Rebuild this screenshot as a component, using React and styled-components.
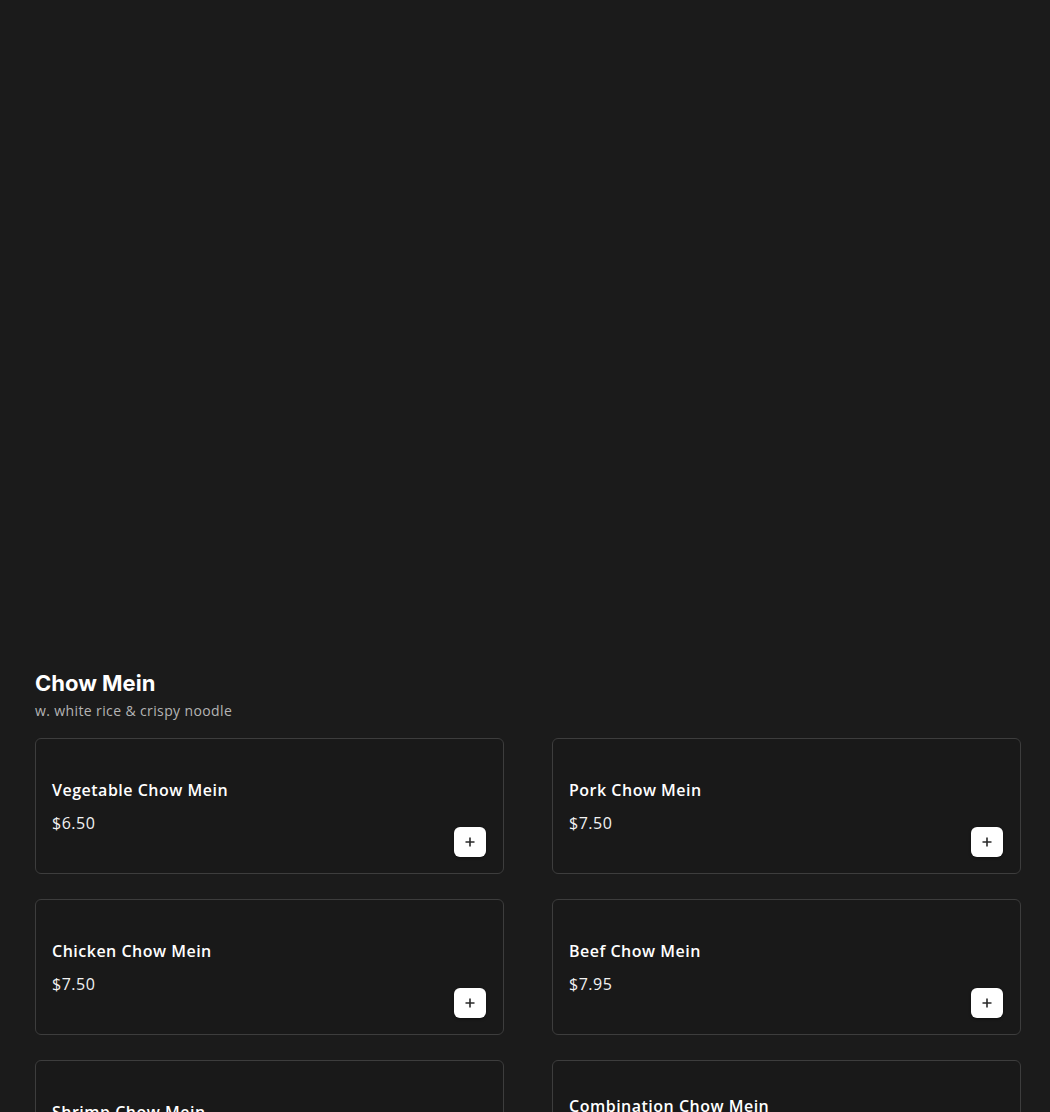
import React from 'react';
import styled, { createGlobalStyle } from 'styled-components';

const GlobalStyle = createGlobalStyle`
  body {
    margin: 0;
    background: #1b1b1b;
    font-family: "Open Sans", "Noto Sans", sans-serif;
    color: #fff;
  }
`;

const Page = styled.div`
  min-height: 1112px;
  background: #1b1b1b;
`;

const Hero = styled.div`
  height: 668px;
`;

const Section = styled.section`
  padding: 0 29px 0 35px;
`;

const Title = styled.h2`
  margin: 0;
  font-family: Inter, Roboto, sans-serif;
  font-weight: 700;
  font-size: 22px;
  line-height: 30px;
  color: #fff;
`;

const Subtitle = styled.p`
  margin: 3px 0 0;
  font-size: 14px;
  line-height: 20px;
  color: #b4b4b4;
  letter-spacing: 0.38px;
`;

const Grid = styled.div`
  display: grid;
  grid-template-columns: 1fr 1fr;
  column-gap: 48px;
  row-gap: 25px;
  margin-top: 17px;
`;

const Card = styled.div`
  box-sizing: border-box;
  min-height: 136px;
  border: 1px solid #3d3d3d;
  border-radius: 6px;
  background: #191919;
  padding: 16px 17px 16px 16px;
  display: flex;
  align-items: flex-end;
  justify-content: space-between;
  gap: 12px;
`;

const Info = styled.div`
  align-self: center;
  display: flex;
  flex-direction: column;
`;

const Name = styled.div`
  font-size: 16px;
  font-weight: 600;
  line-height: 24px;
  letter-spacing: 0.5px;
  color: #fff;
`;

const Desc = styled.div`
  font-size: 12px;
  line-height: 12px;
  color: #b4b4b4;
`;

const Price = styled.div`
  margin-top: 9px;
  font-size: 16px;
  line-height: 24px;
  letter-spacing: 0.5px;
  color: #f2f2f2;
`;

const AddButton = styled.button`
  width: 32px;
  height: 30px;
  flex: none;
  border: none;
  border-radius: 6px;
  background: #fff;
  display: grid;
  place-items: center;
  padding: 0;
  cursor: pointer;
  box-shadow: 0 1px 3px rgba(0, 0, 0, 0.4);
`;

const PlusIcon = () => (
  <svg width="12" height="12" viewBox="0 0 12 12">
    <path d="M6 1.5v9M1.5 6h9" stroke="#2a2a2a" strokeWidth="1.6" />
  </svg>
);

const items = [
  { name: 'Vegetable Chow Mein', price: '$6.50' },
  { name: 'Pork Chow Mein', price: '$7.50' },
  { name: 'Chicken Chow Mein', price: '$7.50' },
  { name: 'Beef Chow Mein', price: '$7.95' },
  { name: 'Shrimp Chow Mein', price: '$8.50' },
  { name: 'Combination Chow Mein', desc: 'Chicken, pork & shrimp', price: '$8.95' },
];

const MenuItem = ({ name, desc, price }) => (
  <Card>
    <Info>
      <Name>{name}</Name>
      {desc && <Desc>{desc}</Desc>}
      <Price>{price}</Price>
    </Info>
    <AddButton aria-label={`Add ${name}`}>
      <PlusIcon />
    </AddButton>
  </Card>
);

export default function App() {
  return (
    <Page>
      <GlobalStyle />
      <Hero />
      <Section>
        <Title>Chow Mein</Title>
        <Subtitle>w. white rice &amp; crispy noodle</Subtitle>
        <Grid>
          {items.map((item) => (
            <MenuItem key={item.name} {...item} />
          ))}
        </Grid>
      </Section>
    </Page>
  );
}
